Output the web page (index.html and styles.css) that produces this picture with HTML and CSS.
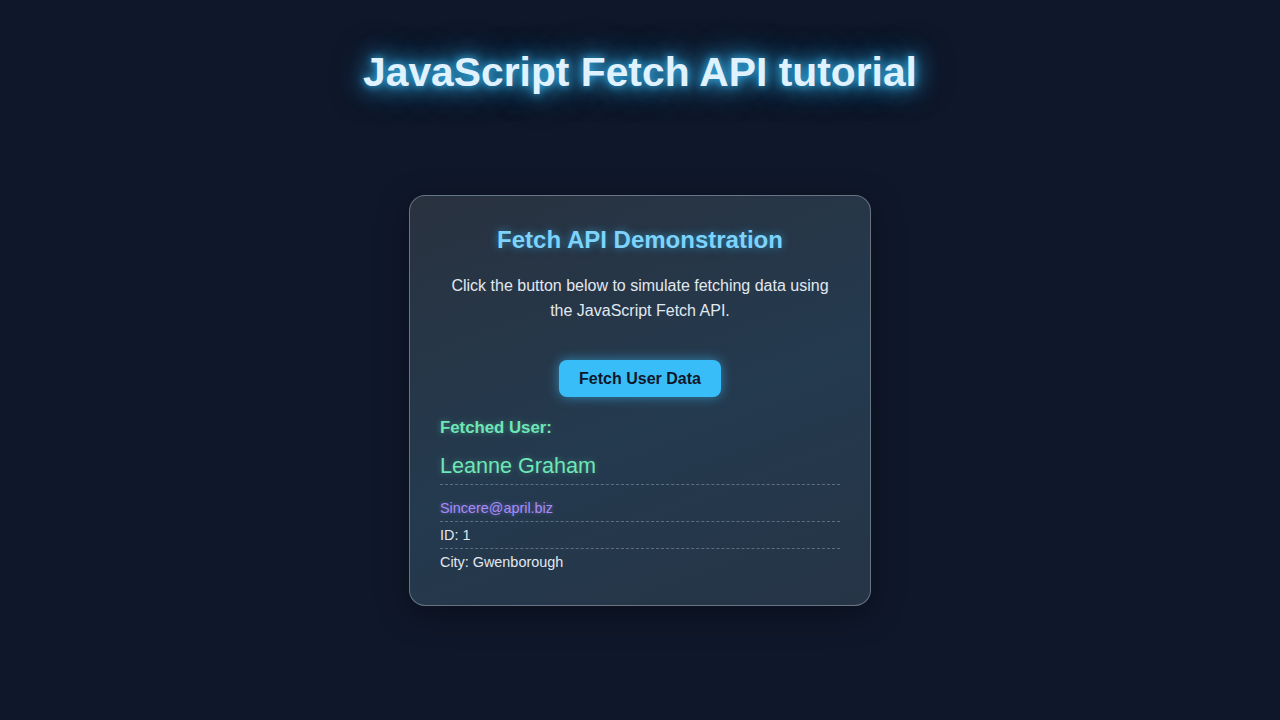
FILE: index.html
```html
<!DOCTYPE html>
<html lang="en">
<head>
<meta charset="utf-8">
<title>JavaScript Fetch API tutorial</title>
<link rel="stylesheet" href="styles.css">
</head>
<body>
<main class="page">
  <h1 class="title">JavaScript Fetch API tutorial</h1>
  <section class="card">
    <h2 class="card-title">Fetch API Demonstration</h2>
    <p class="intro">Click the button below to simulate fetching data using the JavaScript Fetch API.</p>
    <div class="actions"><button class="fetch-btn" type="button">Fetch User Data</button></div>
    <div class="result">
      <div class="result-label">Fetched User:</div>
      <div class="user-name">Leanne Graham</div>
      <div class="row email">Sincere@april.biz</div>
      <div class="row">ID: 1</div>
      <div class="row last">City: Gwenborough</div>
    </div>
  </section>
</main>
</body>
</html>
```
FILE: styles.css
```css
html, body {
  margin: 0;
  padding: 0;
  background: #0f172a;
  height: 100%;
}
body {
  font-family: "Liberation Sans", Arial, sans-serif;
  color: #e2e8f0;
}
.page {
  display: flex;
  flex-direction: column;
  align-items: center;
  padding-top: 49px;
}
.title {
  margin: 0;
  font-size: 40.8px;
  line-height: 46px;
  font-weight: 700;
  color: #e0f2fe;
  text-shadow: 0 0 8px rgba(56, 189, 248, 0.9), 0 0 22px #38bdf8, 0 0 36px rgba(56, 189, 248, 0.5);
}
.card {
  margin-top: 100px;
  width: 400px;
  padding: 30px;
  border: 1px solid rgba(203, 213, 225, 0.4);
  border-radius: 16px;
  background: linear-gradient(160deg, #29323f 0%, #243a4f 55%, #263446 100%);
  box-shadow: 0 8px 32px rgba(0, 0, 0, 0.35);
  text-align: center;
}
.card-title {
  margin: 0 0 19px;
  font-size: 24px;
  line-height: 28px;
  font-weight: 700;
  color: #7dd3fc;
  text-shadow: 0 0 8px rgba(56, 189, 248, 0.6);
}
.intro {
  margin: 0;
  font-size: 16px;
  line-height: 25px;
  color: #e2e8f0;
}
.actions {
  margin-top: 37px;
}
.fetch-btn {
  font-family: inherit;
  font-size: 16px;
  line-height: 17px;
  font-weight: 700;
  color: #0f172a;
  background: #38bdf8;
  border: none;
  border-radius: 8px;
  padding: 10px 20px;
  box-shadow: 0 0 12px rgba(56, 189, 248, 0.6);
  cursor: pointer;
}
.result {
  margin-top: 20px;
  text-align: left;
}
.result-label {
  font-size: 16.8px;
  line-height: 20px;
  font-weight: 700;
  color: #6ee7b7;
  text-shadow: 0 0 6px rgba(110, 231, 183, 0.4);
  padding-top: 1px;
}
.user-name {
  margin-top: 15px;
  font-size: 21.6px;
  line-height: 25px;
  color: #6ee7b7;
  padding-bottom: 6px;
  border-bottom: 1px dashed rgba(148, 163, 184, 0.5);
  text-shadow: 0 0 6px rgba(110, 231, 183, 0.35);
}
.row {
  font-size: 14.4px;
  line-height: 16px;
  padding: 5px 0;
  border-bottom: 1px dashed rgba(148, 163, 184, 0.5);
  color: #e2e8f0;
}
.row.email {
  margin-top: 10px;
  color: #a78bfa;
  text-shadow: 0 0 4px rgba(167, 139, 250, 0.5);
}
.row.last {
  border-bottom: none;
}
```
